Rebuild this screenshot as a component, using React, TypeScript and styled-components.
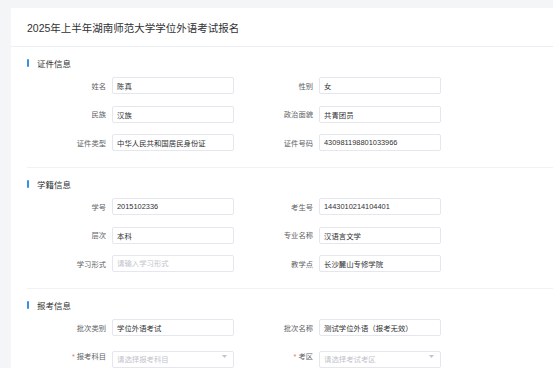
import React from "react";
import styled, { createGlobalStyle } from "styled-components";

const Global = createGlobalStyle`
  html, body { margin: 0; padding: 0; background: #f4f5f7; }
  body {
    font-family: "Liberation Sans", "Noto Sans CJK SC", sans-serif;
    overflow: hidden;
  }
`;

const Page = styled.div`
  padding: 8px 0 0 11px;
  min-height: 368px;
  box-sizing: border-box;
`;

const Card = styled.div`
  background: #fff;
  min-height: 360px;
`;

const CardHeader = styled.div`
  height: 38px;
  display: flex;
  align-items: center;
  padding: 0 16px;
  border-bottom: 1px solid #ebeef5;
  font-size: 10.5px;
  color: #303133;
`;

const Body = styled.div`
  padding-left: 16px;
`;

const Section = styled.section`
  padding: 11px 0 16px;
  border-bottom: 1px solid #f0f2f5;
`;

const SectionTitle = styled.div`
  display: flex;
  align-items: center;
  gap: 8px;
  height: 10px;
  font-size: 8.5px;
  color: #303133;
  &::before {
    content: "";
    width: 2px;
    height: 8px;
    border-radius: 1px;
    background: #3a8ee6;
  }
`;

const Grid = styled.div`
  margin-top: 9px;
  padding-left: 24px;
  display: grid;
  grid-template-columns: 207px 207px;
  row-gap: 11.5px;
`;

const Field = styled.div`
  display: flex;
  align-items: center;
  height: 17px;
`;

const Label = styled.label`
  width: 61px;
  box-sizing: border-box;
  padding-right: 6px;
  text-align: right;
  font-size: 7.3px;
  color: #606266;
  white-space: nowrap;
`;

const Req = styled.span`
  color: #f56c6c;
  margin-right: 2px;
`;

const Input = styled.input`
  width: 122px;
  height: 17px;
  box-sizing: border-box;
  border: 1px solid #e4e7ed;
  border-radius: 2px;
  padding: 0 4px;
  font-family: inherit;
  font-size: 7.4px;
  color: #303133;
  background: #fff;
  outline: none;
  &::placeholder {
    color: #c0c4cc;
  }
`;

const SelectBox = styled.div`
  position: relative;
  width: 122px;
  height: 17px;
`;

const Caret = styled.svg`
  position: absolute;
  right: 7px;
  top: 7px;
  width: 5px;
  height: 3px;
`;

type F = { label: string; value?: string; placeholder?: string; required?: boolean; select?: boolean };

const sections: { title: string; fields: F[] }[] = [
  {
    title: "证件信息",
    fields: [
      { label: "姓名", value: "陈真" },
      { label: "性别", value: "女" },
      { label: "民族", value: "汉族" },
      { label: "政治面貌", value: "共青团员" },
      { label: "证件类型", value: "中华人民共和国居民身份证" },
      { label: "证件号码", value: "430981198801033966" },
    ],
  },
  {
    title: "学籍信息",
    fields: [
      { label: "学号", value: "2015102336" },
      { label: "考生号", value: "1443010214104401" },
      { label: "层次", value: "本科" },
      { label: "专业名称", value: "汉语言文学" },
      { label: "学习形式", placeholder: "请输入学习形式" },
      { label: "教学点", value: "长沙麓山专修学院" },
    ],
  },
  {
    title: "报考信息",
    fields: [
      { label: "批次类别", value: "学位外语考试" },
      { label: "批次名称", value: "测试学位外语（报考无效）" },
      { label: "报考科目", placeholder: "请选择报考科目", required: true, select: true },
      { label: "考区", placeholder: "请选择考试考区", required: true, select: true },
    ],
  },
];

function FieldRow({ f }: { f: F }) {
  const input = (
    <Input readOnly value={f.value ?? ""} placeholder={f.placeholder} />
  );
  return (
    <Field>
      <Label>
        {f.required && <Req>*</Req>}
        {f.label}
      </Label>
      {f.select ? (
        <SelectBox>
          {input}
          <Caret viewBox="0 0 5 3">
            <polygon points="0,0 5,0 2.5,3" fill="#c0c4cc" />
          </Caret>
        </SelectBox>
      ) : (
        input
      )}
    </Field>
  );
}

export default function App() {
  return (
    <>
      <Global />
      <Page>
        <Card>
          <CardHeader>2025年上半年湖南师范大学学位外语考试报名</CardHeader>
          <Body>
            {sections.map((s) => (
              <Section key={s.title}>
                <SectionTitle>{s.title}</SectionTitle>
                <Grid>
                  {s.fields.map((f) => (
                    <FieldRow key={f.label} f={f} />
                  ))}
                </Grid>
              </Section>
            ))}
          </Body>
        </Card>
      </Page>
    </>
  );
}
